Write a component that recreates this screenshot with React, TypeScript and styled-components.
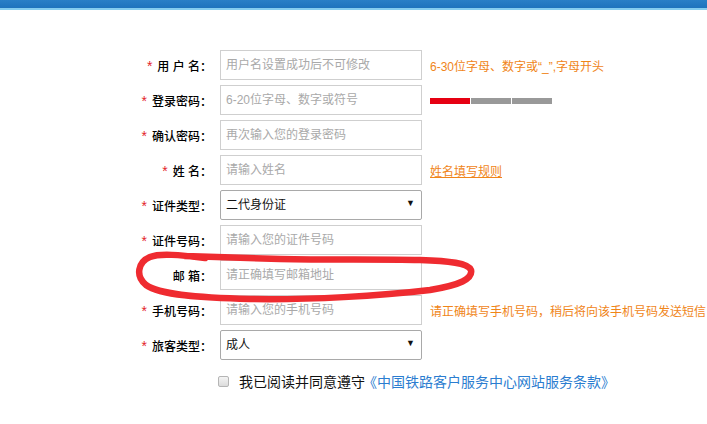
import React from 'react';
import styled, { createGlobalStyle } from 'styled-components';

const GlobalStyle = createGlobalStyle`
  html, body {
    margin: 0;
    padding: 0;
    background: #fff;
    overflow: hidden;
  }
  body {
    font-family: 'Liberation Sans', 'Noto Sans CJK SC', sans-serif;
    font-size: 12px;
    color: #333;
  }
`;

const S = {
  Page: styled.div`
    position: relative;
    width: 707px;
    height: 424px;
    overflow: hidden;
  `,
  TopBar: styled.div`
    height: 8px;
    background: linear-gradient(#2a7fc7, #1f73bd);
    border-bottom: 2px solid #86cdef;
  `,
  Form: styled.form`
    display: flex;
    flex-direction: column;
    gap: 5px;
    margin-top: 40px;
  `,
  Row: styled.div`
    display: flex;
    align-items: center;
    height: 30px;
  `,
  Label: styled.label`
    width: 212px;
    flex-shrink: 0;
    text-align: right;
    color: #000;
    font-size: 12px;
    font-weight: 500;
    white-space: pre;
  `,
  Star: styled.span`
    color: #e3242b;
    font-size: 14px;
    font-weight: 400;
    margin-right: 5px;
  `,
  Input: styled.input`
    box-sizing: border-box;
    flex-shrink: 0;
    width: 202px;
    height: 30px;
    margin-left: 8px;
    padding: 0 5px;
    border: 1px solid #cfcfcf;
    outline: none;
    font-family: inherit;
    font-size: 12px;
    color: #333;
    &::placeholder {
      color: #a9a9a9;
    }
  `,
  SelectWrap: styled.div`
    position: relative;
    flex-shrink: 0;
    width: 202px;
    height: 30px;
    margin-left: 8px;
  `,
  Select: styled.select`
    box-sizing: border-box;
    width: 100%;
    height: 100%;
    padding: 0 5px;
    appearance: none;
    border: 1px solid #a9a9a9;
    border-radius: 2px;
    background: #fff;
    font-family: inherit;
    font-size: 12px;
    color: #111;
    outline: none;
  `,
  Arrow: styled.span`
    position: absolute;
    right: 7px;
    top: 8px;
    font-size: 9px;
    color: #111;
    pointer-events: none;
  `,
  Hint: styled.span<{ $link?: boolean }>`
    margin-left: 8px;
    color: #f08519;
    white-space: nowrap;
    text-decoration: ${(p) => (p.$link ? 'underline' : 'none')};
    cursor: ${(p) => (p.$link ? 'pointer' : 'default')};
  `,
  Strength: styled.div`
    display: flex;
    gap: 1px;
    margin-left: 8px;
    margin-top: 2px;
  `,
  Segment: styled.span<{ $on?: boolean }>`
    width: 40px;
    height: 6px;
    background: ${(p) => (p.$on ? '#e60012' : '#999')};
  `,
  Agree: styled.div`
    display: flex;
    align-items: center;
    gap: 10px;
    height: 30px;
    margin-top: 1px;
    padding-left: 218px;
    font-size: 14px;
    color: #111;
    white-space: nowrap;
  `,
  Check: styled.input`
    appearance: none;
    box-sizing: border-box;
    flex-shrink: 0;
    width: 11px;
    height: 11px;
    margin: 0;
    border: 1px solid #b5b5b5;
    border-radius: 2px;
    background: linear-gradient(#f4f4f4, #dcdcdc);
  `,
  Terms: styled.a`
    color: #2b7dd0;
    text-decoration: none;
    margin-left: -12px;
  `,
  Mark: styled.svg`
    position: absolute;
    left: 0;
    top: 0;
    pointer-events: none;
  `,
};

type Field = {
  label: string;
  required?: boolean;
  placeholder?: string;
  options?: string[];
  hint?: string;
  link?: boolean;
  strength?: boolean;
};

const fields: Field[] = [
  { label: '用 户 名：', required: true, placeholder: '用户名设置成功后不可修改', hint: '6-30位字母、数字或“_”,字母开头' },
  { label: '登录密码：', required: true, placeholder: '6-20位字母、数字或符号', strength: true },
  { label: '确认密码：', required: true, placeholder: '再次输入您的登录密码' },
  { label: '姓 名：', required: true, placeholder: '请输入姓名', hint: '姓名填写规则', link: true },
  { label: '证件类型：', required: true, options: ['二代身份证', '港澳通行证', '台湾通行证', '护照'] },
  { label: '证件号码：', required: true, placeholder: '请输入您的证件号码' },
  { label: '邮 箱：', placeholder: '请正确填写邮箱地址' },
  { label: '手机号码：', required: true, placeholder: '请输入您的手机号码', hint: '请正确填写手机号码，稍后将向该手机号码发送短信' },
  { label: '旅客类型：', required: true, options: ['成人', '儿童', '学生', '残疾军人'] },
];

const App = () => {
  return (
    <S.Page>
      <GlobalStyle />
      <S.TopBar />
      <S.Form>
        {fields.map((f) => (
          <S.Row key={f.label}>
            <S.Label>
              {f.required && <S.Star>*</S.Star>}
              {f.label}
            </S.Label>
            {f.options ? (
              <S.SelectWrap>
                <S.Select defaultValue={f.options[0]}>
                  {f.options.map((o) => (
                    <option key={o}>{o}</option>
                  ))}
                </S.Select>
                <S.Arrow>▼</S.Arrow>
              </S.SelectWrap>
            ) : (
              <S.Input placeholder={f.placeholder} />
            )}
            {f.hint && <S.Hint $link={f.link}>{f.hint}</S.Hint>}
            {f.strength && (
              <S.Strength>
                <S.Segment $on />
                <S.Segment />
                <S.Segment />
              </S.Strength>
            )}
          </S.Row>
        ))}
        <S.Agree>
          <S.Check type="checkbox" />
          <span>我已阅读并同意遵守</span>
          <S.Terms href="#">《中国铁路客户服务中心网站服务条款》</S.Terms>
        </S.Agree>
      </S.Form>
      {/* hand-drawn red loop around the email row */}
      <S.Mark width={707} height={424} viewBox="0 0 707 424">
        <path
          d="M205 258 C180 255 160 253 150 257 C138 262 135 276 146 285 C160 295 200 298 250 299 C310 300 380 296 430 290 C460 285 473 279 471 270 C468 263 450 261 420 260 C380 259 330 260 280 259 C240 258 210 257 185 256"
          fill="none"
          stroke="#ef2b30"
          strokeWidth={6.5}
          strokeLinecap="round"
          strokeLinejoin="round"
        />
      </S.Mark>
    </S.Page>
  );
};

export default App;
